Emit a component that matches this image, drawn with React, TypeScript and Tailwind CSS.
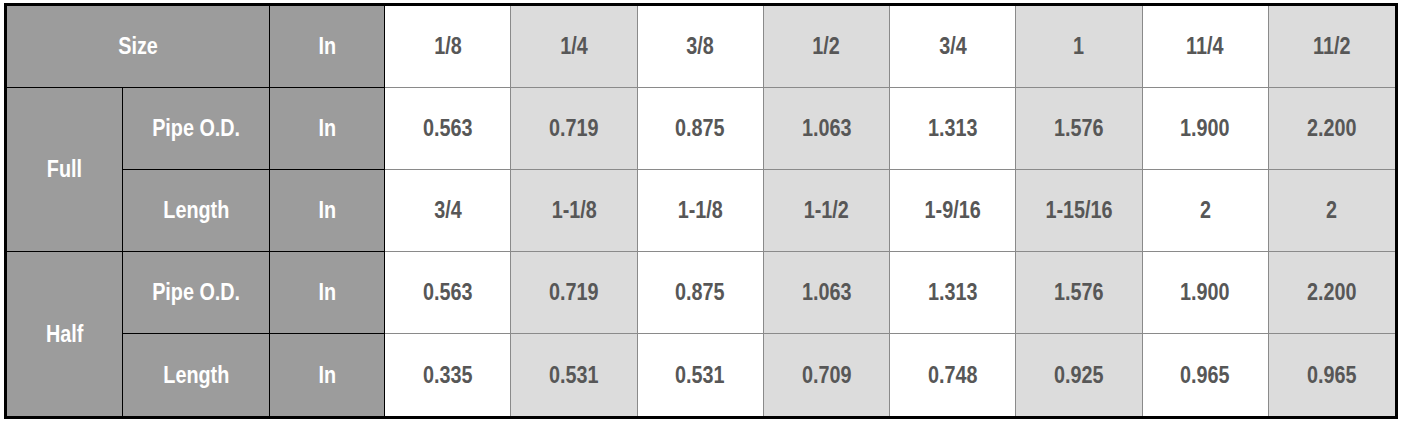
const sizes = ["1/8", "1/4", "3/8", "1/2", "3/4", "1", "11/4", "11/2"];

type Row = { group?: string; label: string; values: string[] };

const rows: Row[] = [
  { group: "Full", label: "Pipe O.D.", values: ["0.563", "0.719", "0.875", "1.063", "1.313", "1.576", "1.900", "2.200"] },
  { label: "Length", values: ["3/4", "1-1/8", "1-1/8", "1-1/2", "1-9/16", "1-15/16", "2", "2"] },
  { group: "Half", label: "Pipe O.D.", values: ["0.563", "0.719", "0.875", "1.063", "1.313", "1.576", "1.900", "2.200"] },
  { label: "Length", values: ["0.335", "0.531", "0.531", "0.709", "0.748", "0.925", "0.965", "0.965"] },
];

const head = "flex items-center justify-center bg-[#9c9c9c] text-white border-black";
const cell = "flex items-center justify-center text-[#575757] border-[#8a8a8a]";

// Narrow bold look: Liberation Sans squeezed horizontally
function T({ children }: { children: string }) {
  return <span className="inline-block scale-x-[0.86] whitespace-nowrap">{children}</span>;
}

function DataCell({ v, i, last }: { v: string; i: number; last: boolean }) {
  const bg = i % 2 === 1 ? "bg-[#dcdcdc]" : "bg-white";
  const r = i < 7 ? "border-r" : "";
  const b = last ? "" : "border-b";
  return (
    <div className={`${cell} ${bg} ${r} ${b}`}>
      <T>{v}</T>
    </div>
  );
}

export default function App() {
  return (
    <div className="bg-white w-[1401px] h-[421px] pl-[4px] pt-[3px] font-['Liberation_Sans',Arial,sans-serif] font-bold text-[23px]">
      <div className="w-[1394px] h-[416px] border-[3px] border-black">
        <div className="grid h-full grid-cols-[116px_147px_115px_repeat(8,1fr)] grid-rows-[repeat(5,82px)]">
          <div className={`${head} col-span-2 border-r border-b`}>
            <T>Size</T>
          </div>
          <div className={`${head} border-r border-b`}>
            <T>In</T>
          </div>
          {sizes.map((s, i) => (
            <DataCell key={s} v={s} i={i} last={false} />
          ))}
          {rows.map((row, ri) => {
            const last = ri === rows.length - 1;
            return [
              row.group ? (
                <div key={`g${ri}`} className={`${head} row-span-2 border-r ${ri === 2 ? "" : "border-b"}`}>
                  <T>{row.group}</T>
                </div>
              ) : null,
              <div key={`l${ri}`} className={`${head} border-r ${last ? "" : "border-b"}`}>
                <T>{row.label}</T>
              </div>,
              <div key={`u${ri}`} className={`${head} border-r ${last ? "" : "border-b"}`}>
                <T>In</T>
              </div>,
              ...row.values.map((v, i) => <DataCell key={`${ri}-${i}`} v={v} i={i} last={last} />),
            ];
          })}
        </div>
      </div>
    </div>
  );
}
